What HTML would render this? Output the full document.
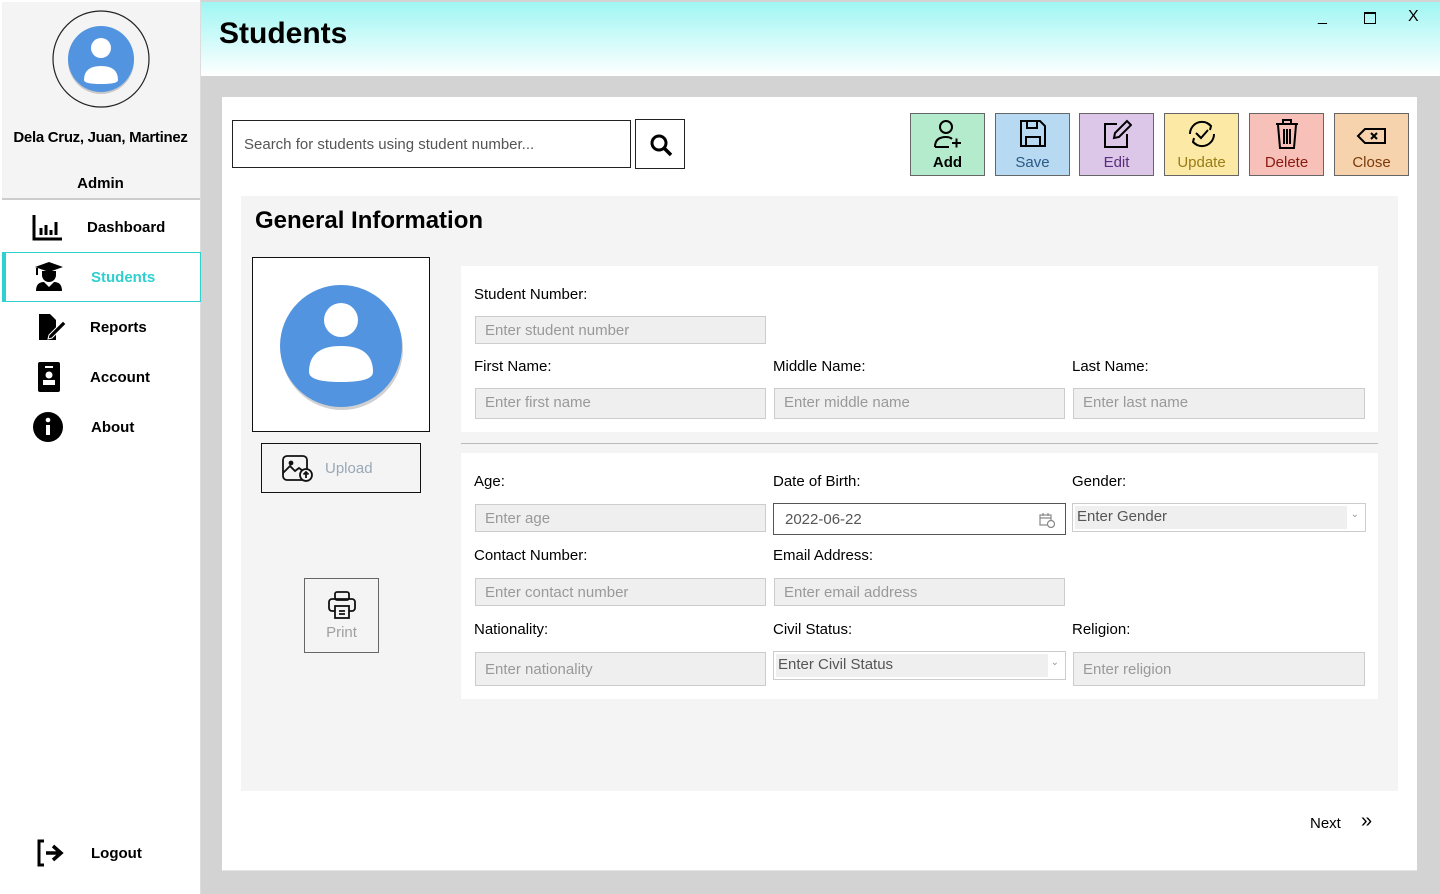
<!DOCTYPE html>
<html><head><meta charset="utf-8"><style>
*{box-sizing:border-box;margin:0;padding:0}
body{width:1440px;height:894px;position:relative;background:#d3d3d3;font-family:"Liberation Sans","DejaVu Sans",sans-serif;overflow:hidden;color:#000}
.a{position:absolute}
.side{left:0;top:0;width:201px;height:894px;background:#fff;border-right:1px solid #ddd}
.top{left:2px;top:2px;width:198px;height:198px;background:#f4f4f4;border-bottom:2px solid #ccc}
.nav{left:2px;width:199px;height:50px;font-size:15px;display:flex;align-items:center}
.nav span{position:absolute;left:85px}
.hdr{left:201px;top:2px;width:1239px;height:74px;background:linear-gradient(#9ff6f3,#fff)}
.lbl{font-size:15px}
.inp{height:28px;background:#efefef;border:1px solid #ccc;font-size:15px;color:#999;padding:5px 9px}
.btn{top:113px;width:75px;height:63px;border:1px solid #666;text-align:center;font-size:15px}
.btn .ic{height:32px;margin-top:4px;display:flex;align-items:center;justify-content:center}
.btn div.t{margin-top:4px}
</style></head><body>
<div class="a side"></div>
<div class="a top"></div>
<svg class="a" style="left:52px;top:10px" width="98" height="98"><circle cx="49" cy="49" r="48" fill="none" stroke="#222" stroke-width="1.2"/><circle cx="49" cy="51" r="33" fill="#c8c8c8"/><circle cx="49" cy="49" r="33" fill="#5294e0"/><circle cx="49" cy="38" r="10" fill="#fff"/><path d="M32 70q0-14 17-14t17 14q0 4-17 4t-17-4z" fill="#fff"/></svg>
<div class="a" style="left:0;width:201px;top:129px;text-align:center;font-size:15px;font-weight:bold;letter-spacing:-0.3px">Dela Cruz, Juan, Martinez</div>
<div class="a" style="left:0;width:201px;top:175px;text-align:center;font-size:15px;font-weight:bold">Admin</div>
<div class="a nav" style="top:202px"><svg class="a" style="left:30px" width="32" height="28"><path d="M2 2v24h28" fill="none" stroke="#000" stroke-width="3"/><path d="M9 15v7M14 12v10M19 17v5M24 9v13" stroke="#000" stroke-width="3"/></svg><span style="font-weight:bold">Dashboard</span></div>
<div class="a nav" style="top:252px;border:1px solid #2fd0d0;border-left:4px solid #2fd0d0;color:#2fcfd0"><svg class="a" style="left:28px" width="30" height="30"><path d="M1 5l14-5 14 5-14 5z" fill="#000"/><path d="M8 9v4a7 7 0 0014 0V9z" fill="#000"/><path d="M2 29q0-9 8-9l5 5 5-5q8 0 8 9z" fill="#000"/><path d="M3 6v7" stroke="#000" stroke-width="2"/></svg><span style="font-weight:bold">Students</span></div>
<div class="a nav" style="top:302px"><svg class="a" style="left:35px" width="32" height="28"><path d="M2 1h11l6 6v20H2z" fill="#000"/><path d="M12 22l14-14 3 3-14 14-4 1z" fill="#000" stroke="#fff" stroke-width="1"/></svg><span style="left:88px;font-weight:bold">Reports</span></div>
<div class="a nav" style="top:352px"><svg class="a" style="left:36px" width="22" height="30"><rect x="0" y="0" width="22" height="30" rx="2" fill="#000"/><circle cx="11" cy="13" r="3.5" fill="#fff"/><rect x="5" y="18" width="12" height="5" fill="#fff"/><rect x="7" y="4" width="8" height="2" fill="#fff"/></svg><span style="left:88px;font-weight:bold">Account</span></div>
<div class="a nav" style="top:402px"><svg class="a" style="left:30px" width="32" height="32"><circle cx="16" cy="16" r="15" fill="#000"/><rect x="14" y="14" width="4" height="10" fill="#fff"/><circle cx="16" cy="9" r="2.3" fill="#fff"/></svg><span style="left:89px;font-weight:bold">About</span></div>
<svg class="a" style="left:36px;top:839px" width="32" height="28"><path d="M8 2H3v24h5" fill="none" stroke="#000" stroke-width="3"/><path d="M10 14h12M17 7l8 7-8 7" fill="none" stroke="#000" stroke-width="3.5"/></svg>
<div class="a" style="left:91px;top:845px;font-size:15px;font-weight:bold">Logout</div>

<div class="a hdr"></div>
<div class="a" style="left:219px;top:17px;font-size:30px;font-weight:bold">Students</div>
<div class="a" style="left:1318px;top:8px;font-size:16px">_</div>
<div class="a" style="left:1364px;top:12px;width:12px;height:12px;border:1.5px solid #000;border-top-width:2.5px"></div>
<div class="a" style="left:1408px;top:8px;font-size:16px">X</div>

<div class="a" style="left:222px;top:97px;width:1195px;height:774px;background:#fff;border-bottom:1px solid #e4e4e4"></div>
<div class="a" style="left:232px;top:120px;width:399px;height:48px;border:1px solid #222;font-size:15px;color:#555;padding:15px 11px">Search for students using student number...</div>
<div class="a" style="left:635px;top:119px;width:50px;height:50px;border:1px solid #222"><svg style="margin:13px" width="24" height="24"><circle cx="10" cy="10" r="7" fill="none" stroke="#000" stroke-width="3"/><path d="M15 15l7 7" stroke="#000" stroke-width="3.5"/></svg></div>

<div class="a btn" style="left:910px;background:#b4ebcc;color:#000;font-weight:bold"><div class="ic"><svg width="30" height="32" fill="none" stroke="#000" stroke-width="2"><circle cx="13" cy="9" r="6"/><path d="M2 29q0-10 11-10q4 0 6 2M2 29h14M19 25h9M23.5 20.5v9"/></svg></div><div class="t">Add</div></div>
<div class="a btn" style="left:995px;background:#b7d9f1;color:#2c5a85"><div class="ic"><svg width="28" height="30" fill="none" stroke="#000" stroke-width="2"><path d="M2 2h19l5 5v20H2z"/><path d="M8 2v7h10V2M7 27v-9h14v9"/></svg></div><div class="t">Save</div></div>
<div class="a btn" style="left:1079px;background:#dcc7e8;color:#5a2c7c"><div class="ic"><svg width="30" height="30" fill="none" stroke="#000" stroke-width="2"><path d="M15 5H3v23h22V15"/><path d="M12 19l1-5 12-12 4 4-12 12z"/></svg></div><div class="t">Edit</div></div>
<div class="a btn" style="left:1164px;background:#fbe9a5;color:#9a7c15"><div class="ic"><svg width="30" height="30" fill="none" stroke="#000" stroke-width="2"><path d="M6 7a12 12 0 0118 0M24 23a12 12 0 01-18 0M3 15a12 12 0 013-8M27 15a12 12 0 01-3 8"/><path d="M9 14l5 5 7-8"/><path d="M20 4l4 3-1 4M10 26l-4-3 1-4"/></svg></div><div class="t">Update</div></div>
<div class="a btn" style="left:1249px;background:#f7c0b8;color:#8a1a10"><div class="ic"><svg width="26" height="32" fill="none" stroke="#000" stroke-width="2"><path d="M2 6h22M9 5V2h8v3M4 7l2 23h14l2-23M10 11v15M13 11v15M16 11v15"/></svg></div><div class="t">Delete</div></div>
<div class="a btn" style="left:1334px;background:#f6d2ad;color:#7a3a0a"><div class="ic"><svg width="32" height="30" fill="none" stroke="#000" stroke-width="2"><path d="M2 17l7-7h20v14H9z"/><path d="M15 14l6 6M21 14l-6 6"/></svg></div><div class="t">Close</div></div>

<div class="a" style="left:241px;top:196px;width:1157px;height:595px;background:#f4f4f4"></div>
<div class="a" style="left:255px;top:207px;font-size:24px;font-weight:bold">General Information</div>
<div class="a" style="left:252px;top:257px;width:178px;height:175px;border:1px solid #111;background:#fff"></div>
<svg class="a" style="left:279px;top:284px" width="126" height="128"><circle cx="63" cy="65" r="61" fill="#d0d0d0"/><circle cx="62" cy="62" r="61" fill="#5294e0"/><circle cx="62" cy="36" r="17" fill="#fff"/><path d="M30 88q0-26 32-26t32 26q0 10-32 10t-32-10z" fill="#fff"/></svg>
<div class="a" style="left:261px;top:443px;width:160px;height:50px;border:1px solid #111"><svg class="a" style="left:20px;top:11px" width="32" height="28" fill="none" stroke="#111" stroke-width="1.8"><rect x="1" y="1" width="24" height="24" rx="4"/><path d="M1 18l7-7 5 5 4-3 4 3"/><circle cx="9" cy="8" r="1.5" fill="#111"/><circle cx="24" cy="20" r="6" fill="#f4f4f4"/><path d="M24 23v-6M21.5 19.5l2.5-2.5 2.5 2.5"/></svg><span class="a" style="left:63px;top:16px;font-size:15px;color:#98a8b8">Upload</span></div>
<div class="a" style="left:304px;top:578px;width:75px;height:75px;border:1px solid #666;text-align:center"><svg style="margin-top:12px" width="28" height="28" fill="none" stroke="#111" stroke-width="1.8"><rect x="7" y="1" width="14" height="8" rx="2"/><rect x="1" y="8" width="26" height="12" rx="3"/><rect x="7" y="15" width="14" height="12" fill="#f4f4f4"/><path d="M11 20h6M11 23h6"/></svg><div style="font-size:15px;color:#a0a0a0">Print</div></div>

<div class="a" style="left:461px;top:266px;width:917px;height:166px;background:#fff"></div>
<div class="a" style="left:461px;top:443px;width:917px;height:1px;background:#bbb"></div>
<div class="a" style="left:461px;top:453px;width:917px;height:246px;background:#fff"></div>

<div class="a lbl" style="left:474px;top:286px">Student Number:</div>
<div class="a inp" style="left:475px;top:316px;width:291px">Enter student number</div>
<div class="a lbl" style="left:474px;top:358px">First Name:</div>
<div class="a lbl" style="left:773px;top:358px">Middle Name:</div>
<div class="a lbl" style="left:1072px;top:358px">Last Name:</div>
<div class="a inp" style="left:475px;top:388px;width:291px;height:31px">Enter first name</div>
<div class="a inp" style="left:774px;top:388px;width:291px;height:31px">Enter middle name</div>
<div class="a inp" style="left:1073px;top:388px;width:292px;height:31px">Enter last name</div>

<div class="a lbl" style="left:474px;top:473px">Age:</div>
<div class="a lbl" style="left:773px;top:473px">Date of Birth:</div>
<div class="a lbl" style="left:1072px;top:473px">Gender:</div>
<div class="a inp" style="left:475px;top:504px;width:291px">Enter age</div>
<div class="a" style="left:773px;top:503px;width:293px;height:32px;border:1px solid #555;background:#fff;font-size:15px;color:#555;padding:7px 11px">2022-06-22<svg class="a" style="right:10px;top:8px" width="16" height="16" fill="none" stroke="#888" stroke-width="1.2"><rect x="1" y="3" width="11" height="10"/><path d="M1 6h11M4 1v3M9 1v3"/><circle cx="12" cy="12" r="3.5" fill="#fff"/></svg></div>
<div class="a" style="left:1072px;top:503px;width:294px;height:29px;border:1px solid #ccc;background:#fff"><div style="width:272px;height:23px;margin:2px;background:#efefef;font-size:15px;color:#555;padding:2px">Enter Gender</div><span class="a" style="right:6px;top:5px;font-size:10px;color:#999">&#8964;</span></div>
<div class="a lbl" style="left:474px;top:547px">Contact Number:</div>
<div class="a lbl" style="left:773px;top:547px">Email Address:</div>
<div class="a inp" style="left:475px;top:578px;width:291px">Enter contact number</div>
<div class="a inp" style="left:774px;top:578px;width:291px">Enter email address</div>
<div class="a lbl" style="left:474px;top:621px">Nationality:</div>
<div class="a lbl" style="left:773px;top:621px">Civil Status:</div>
<div class="a lbl" style="left:1072px;top:621px">Religion:</div>
<div class="a inp" style="left:475px;top:652px;width:291px;height:34px;padding-top:8px">Enter nationality</div>
<div class="a" style="left:773px;top:651px;width:293px;height:29px;border:1px solid #ccc;background:#fff"><div style="width:272px;height:23px;margin:2px;background:#efefef;font-size:15px;color:#555;padding:2px">Enter Civil Status</div><span class="a" style="right:6px;top:5px;font-size:10px;color:#999">&#8964;</span></div>
<div class="a inp" style="left:1073px;top:652px;width:292px;height:34px;padding-top:8px">Enter religion</div>

<div class="a" style="left:1310px;top:815px;font-size:15px">Next</div>
<div class="a" style="left:1361px;top:810px;font-size:20px">&#187;</div>
</body></html>
